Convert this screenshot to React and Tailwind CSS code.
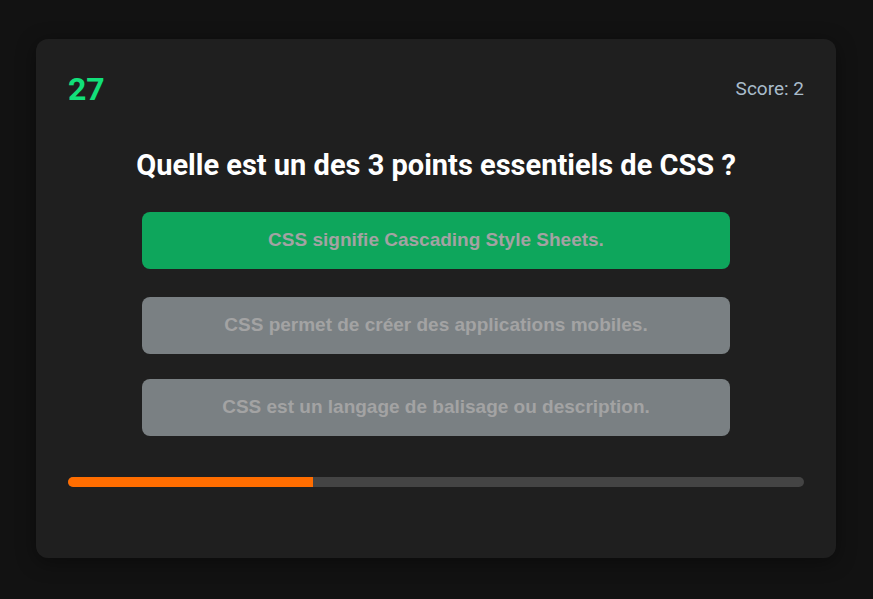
/**
 * App.jsx
 * Quiz card: timer, score, question, answer options and progress bar
 */

const ANSWERS = [
  { id: 'a', label: 'CSS signifie Cascading Style Sheets.', correct: true },
  { id: 'b', label: 'CSS permet de créer des applications mobiles.', correct: false },
  { id: 'c', label: 'CSS est un langage de balisage ou description.', correct: false }
]

const progress = 33.3

export default function App() {
  return (
    <div className="min-h-screen w-full bg-[#121212] flex items-center justify-center font-['Roboto',sans-serif]">
      <div className="w-[800px] h-[519px] mr-px mb-[2px] bg-[#1f1f1f] rounded-xl p-8 shadow-[0_4px_20px_rgba(0,0,0,0.4)]">
        {/* Header */}
        <div className="flex items-center justify-between h-9">
          <span className="text-[32px] leading-9 font-bold text-[#12e07a]">27</span>
          <span className="text-[19px] text-[#a9bccb]">Score: 2</span>
        </div>

        {/* Question */}
        <h2 className="mt-[42px] text-center text-white text-[29px] leading-8 font-bold">
          Quelle est un des 3 points essentiels de CSS ?
        </h2>

        {/* Answers */}
        <div className="mt-[31px] flex flex-col items-center">
          {ANSWERS.map((answer, i) => (
            <button
              key={answer.id}
              disabled
              className={`w-[588px] h-[57px] rounded-lg font-['Liberation_Sans',Arial,sans-serif] font-bold text-[19px] text-[#a3a3a3] ${
                answer.correct ? 'bg-[#0ea65c]' : 'bg-[#7a8083]'
              } ${i === 1 ? 'mt-[28px]' : i === 2 ? 'mt-[25px]' : ''}`}
            >
              {answer.label}
            </button>
          ))}
        </div>

        {/* Progress bar */}
        <div className="mt-[41px] h-2.5 bg-[#444444] rounded-full overflow-hidden">
          <div className="h-full bg-[#ff6d00]" style={{ width: `${progress}%` }} />
        </div>
      </div>
    </div>
  )
}
